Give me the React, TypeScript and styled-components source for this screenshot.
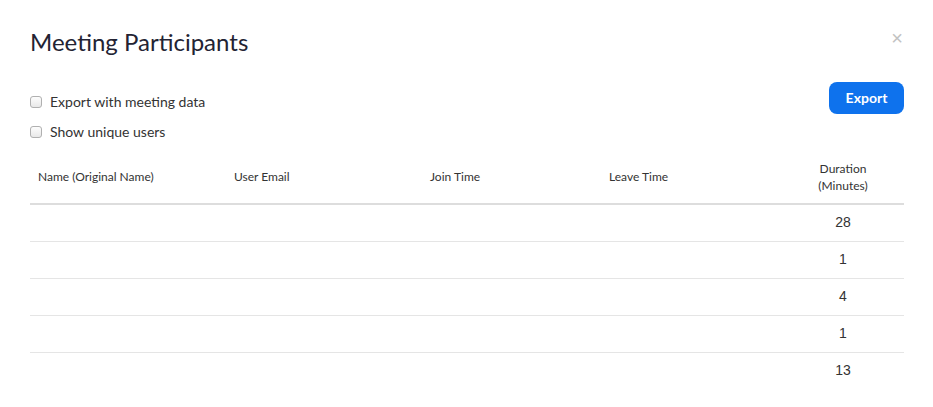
import styled, { createGlobalStyle } from 'styled-components';

const GlobalStyle = createGlobalStyle`
  body {
    margin: 0;
    background: #fff;
    font-family: Lato, "Open Sans", sans-serif;
    color: #232333;
  }
`;

const columns = [
  { key: 'name', label: 'Name (Original Name)', width: 196, align: 'left' },
  { key: 'email', label: 'User Email', width: 196, align: 'left' },
  { key: 'join', label: 'Join Time', width: 179, align: 'left' },
  { key: 'leave', label: 'Leave Time', width: 181, align: 'left' },
  { key: 'duration', label: 'Duration (Minutes)', width: 122, align: 'center' },
] as const;

const durations = [28, 1, 4, 1, 13];

const App = () => {
  return (
    <>
      <GlobalStyle />
      <Dialog>
        <Header>
          <Title>Meeting Participants</Title>
          <Close aria-label="close">×</Close>
        </Header>
        <Toolbar>
          <Options>
            <Option>
              <Box type="checkbox" />
              <span>Export with meeting data</span>
            </Option>
            <Option>
              <Box type="checkbox" />
              <span>Show unique users</span>
            </Option>
          </Options>
          <ExportButton>Export</ExportButton>
        </Toolbar>
        <Table>
          <colgroup>
            {columns.map((c) => (
              <col key={c.key} style={{ width: c.width }} />
            ))}
          </colgroup>
          <thead>
            <tr>
              {columns.map((c) => (
                <Th key={c.key} align={c.align}>
                  {c.key === 'duration' ? (
                    <>
                      Duration
                      <br />
                      (Minutes)
                    </>
                  ) : (
                    c.label
                  )}
                </Th>
              ))}
            </tr>
          </thead>
          <tbody>
            {durations.map((d, i) => (
              <Row key={i} last={i === durations.length - 1}>
                <Td />
                <Td />
                <Td />
                <Td />
                <NumCell>{d}</NumCell>
              </Row>
            ))}
          </tbody>
        </Table>
      </Dialog>
    </>
  );
};

const Dialog = styled.div`
  width: 933px;
  height: 407px;
  box-sizing: border-box;
  padding: 0 29px 0 30px;
  overflow: hidden;
`;

const Header = styled.div`
  display: flex;
  justify-content: space-between;
  align-items: flex-start;
  padding-top: 26px;
  height: 58px;
  box-sizing: border-box;
`;

const Title = styled.h1`
  margin: 0;
  font-size: 24px;
  font-weight: 400;
  line-height: 32px;
  color: #232333;
`;

const Close = styled.button`
  border: 0;
  background: none;
  padding: 0;
  margin: 2px 1px 0 0;
  font-size: 20px;
  line-height: 20px;
  color: #c2c2c2;
  font-family: "Liberation Sans", Arial, sans-serif;
  cursor: pointer;
`;

const Toolbar = styled.div`
  display: flex;
  justify-content: space-between;
  align-items: flex-start;
  padding-top: 25px;
`;

const Options = styled.div`
  display: flex;
  flex-direction: column;
  gap: 12px;
  padding-top: 10px;
`;

const Option = styled.label`
  display: flex;
  align-items: center;
  gap: 8px;
  font-size: 14px;
  line-height: 18px;
  color: #333;
`;

const Box = styled.input`
  appearance: none;
  margin: 0;
  width: 12px;
  height: 12px;
  border: 1px solid #b0b0b0;
  border-radius: 3px;
  background: linear-gradient(#fdfdfd, #e8e8e8);
  box-sizing: border-box;
`;

const ExportButton = styled.button`
  width: 75px;
  height: 32px;
  margin-top: -1px;
  padding: 0 0 2px;
  border: 0;
  border-radius: 8px;
  background: #0e72ed;
  color: #fff;
  font-family: Lato, sans-serif;
  font-size: 14px;
  font-weight: 700;
  cursor: pointer;
`;

const Table = styled.table`
  width: 874px;
  margin-top: 11px;
  border-collapse: collapse;
  table-layout: fixed;
`;

const Th = styled.th<{ align: string }>`
  text-align: ${({ align }) => align};
  font-weight: 400;
  font-size: 12px;
  line-height: 17px;
  color: #333;
  padding: 6px 8px 8px;
  height: 52px;
  box-sizing: border-box;
  border-bottom: 2px solid #ddd;
`;

const Row = styled.tr<{ last: boolean }>`
  height: 37px;
  border-bottom: ${({ last }) => (last ? 'none' : '1px solid #e5e5e5')};
`;

const Td = styled.td`
  padding: 0 8px;
`;

const NumCell = styled.td`
  text-align: center;
  padding: 0 8px 1px;
  font-family: "Liberation Sans", Arial, sans-serif;
  font-size: 14px;
  color: #333;
`;

export default App;
